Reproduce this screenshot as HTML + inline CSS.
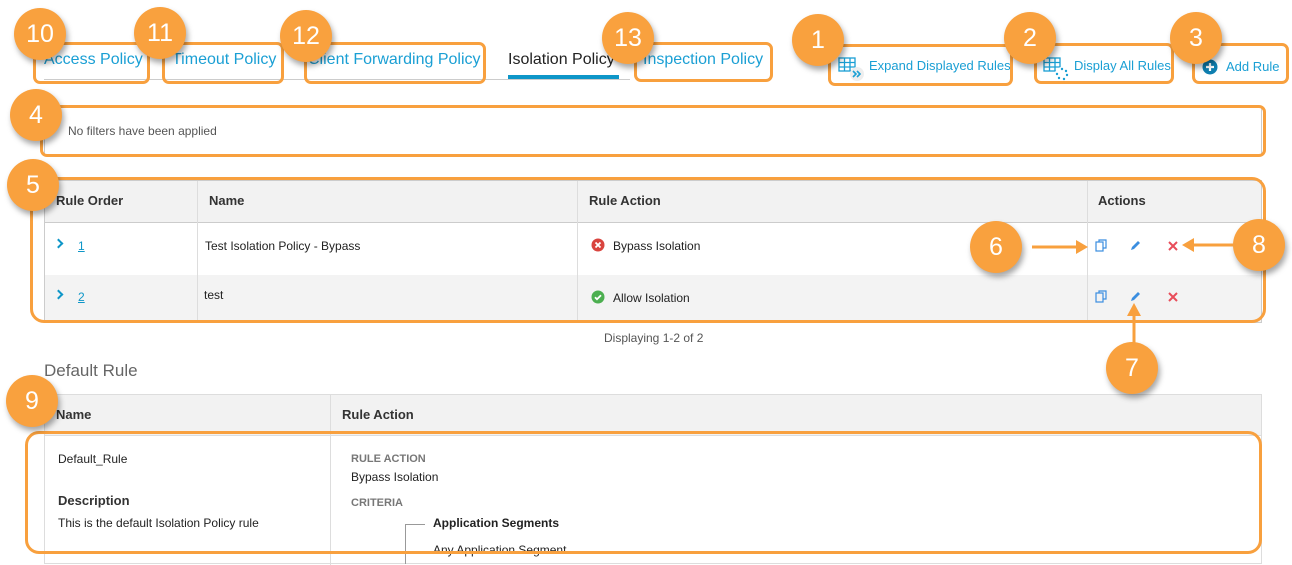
<!DOCTYPE html>
<html><head><meta charset="utf-8"><style>
*{box-sizing:border-box;margin:0;padding:0}
body{width:1292px;height:561px;overflow:hidden;background:#fff;font-family:"Liberation Sans",Arial,sans-serif;color:#222;position:relative}
.a{position:absolute}
.ob{position:absolute;border:3px solid #f8a03e;border-radius:7px}
.c{position:absolute;width:52px;height:52px;border-radius:50%;background:#f9a13e;color:#fff;font-size:25px;text-align:center;line-height:52px;box-shadow:2px 4px 6px rgba(0,0,0,.35);z-index:5}
.tab{position:absolute;top:51px;font-size:16px;color:#1a9fd4;white-space:nowrap}
.btn{position:absolute;font-size:13px;color:#1a9fd4;white-space:nowrap}
.t{position:absolute;font-size:12px;white-space:nowrap}
.h{position:absolute;font-size:13px;font-weight:bold;color:#333;white-space:nowrap}
.chev{position:absolute;width:7px;height:7px;border-top:2.5px solid #0e96c8;border-right:2.5px solid #0e96c8;transform:rotate(45deg)}
</style></head><body>
<!-- tabs -->
<div class="a" style="left:44px;top:79px;width:586px;height:1px;background:#ccc"></div>
<div class="tab" style="left:44px">Access Policy</div>
<div class="tab" style="left:172px">Timeout Policy</div>
<div class="tab" style="left:308px">Client Forwarding Policy</div>
<div class="tab" style="left:508px;color:#222">Isolation Policy</div>
<div class="a" style="left:508px;top:75px;width:111px;height:4px;background:#0e96c8"></div>
<div class="tab" style="left:643px">Inspection Policy</div>
<div class="ob" style="left:33px;top:42px;width:117px;height:42px"></div>
<div class="ob" style="left:162px;top:42px;width:122px;height:42px"></div>
<div class="ob" style="left:304px;top:42px;width:182px;height:42px"></div>
<div class="ob" style="left:634px;top:42px;width:139px;height:40px"></div>
<!-- buttons -->
<svg class="a" style="left:838px;top:57px" width="28" height="26"><g fill="none" stroke="#1a9fd4" stroke-width="1.3"><rect x="1" y="1" width="16" height="13"/><path d="M1 5.5h16M1 10h16M6.5 1v13M12 1v13"/></g><circle cx="19" cy="17" r="7" fill="#eee"/><path d="M15 14l3 3-3 3M19 14l3 3-3 3" stroke="#1a9fd4" stroke-width="1.6" fill="none"/></svg>
<div class="btn" style="left:869px;top:58px">Expand Displayed Rules</div>
<svg class="a" style="left:1043px;top:57px" width="28" height="26"><g fill="none" stroke="#1a9fd4" stroke-width="1.3"><rect x="1" y="1" width="16" height="13"/><path d="M1 5.5h16M1 10h16M6.5 1v13M12 1v13"/></g><circle cx="19" cy="17" r="7" fill="#fff"/><g fill="#1a9fd4"><circle cx="19" cy="12" r="1.2"/><circle cx="23" cy="14" r="1.2"/><circle cx="24" cy="18" r="1.2"/><circle cx="21" cy="22" r="1.2"/><circle cx="16" cy="21" r="1.2"/><circle cx="14" cy="17" r="1.2"/></g></svg>
<div class="btn" style="left:1074px;top:58px">Display All Rules</div>
<svg class="a" style="left:1202px;top:59px" width="16" height="16"><circle cx="8" cy="8" r="7.5" fill="#0e7fb0"/><path d="M8 4v8M4 8h8" stroke="#fff" stroke-width="2.2"/></svg>
<div class="btn" style="left:1226px;top:59px">Add Rule</div>
<div class="ob" style="left:828px;top:44px;width:185px;height:42px"></div>
<div class="ob" style="left:1034px;top:43px;width:140px;height:41px"></div>
<div class="ob" style="left:1192px;top:43px;width:97px;height:41px"></div>
<!-- filter -->
<div class="a" style="left:44px;top:107px;width:1218px;height:49px;border:1px solid #ccc"></div>
<div class="chev" style="left:49px;top:127px;width:6px;height:6px;border-color:#0e7fb0"></div>
<div class="t" style="left:68px;top:124px;color:#555;font-size:12px">No filters have been applied</div>
<div class="ob" style="left:40px;top:105px;width:1226px;height:52px"></div>
<!-- table -->
<div class="a" style="left:44px;top:180px;width:1218px;height:143px;border:1px solid #ccc;background:#fff"></div>
<div class="a" style="left:45px;top:181px;width:1216px;height:42px;background:#f2f2f2;border-bottom:1px solid #ccc"></div>
<div class="a" style="left:45px;top:275px;width:1216px;height:47px;background:#f3f3f3"></div>
<div class="a" style="left:197px;top:181px;width:1px;height:141px;background:#ddd"></div>
<div class="a" style="left:577px;top:181px;width:1px;height:141px;background:#ddd"></div>
<div class="a" style="left:1087px;top:181px;width:1px;height:141px;background:#ddd"></div>
<div class="h" style="left:56px;top:193px">Rule Order</div>
<div class="h" style="left:209px;top:193px">Name</div>
<div class="h" style="left:589px;top:193px">Rule Action</div>
<div class="h" style="left:1098px;top:193px">Actions</div>
<div class="chev" style="left:55px;top:240px"></div>
<div class="t" style="left:78px;top:239px;color:#0e96c8;text-decoration:underline">1</div>
<div class="t" style="left:205px;top:239px">Test Isolation Policy - Bypass</div>
<svg class="a" style="left:591px;top:238px" width="14" height="14"><circle cx="7" cy="7" r="6.5" fill="#d9443e"/><path d="M4.5 4.5l5 5M9.5 4.5l-5 5" stroke="#fff" stroke-width="1.8"/></svg>
<div class="t" style="left:613px;top:239px">Bypass Isolation</div>
<div class="chev" style="left:55px;top:291px"></div>
<div class="t" style="left:78px;top:290px;color:#0e96c8;text-decoration:underline">2</div>
<div class="t" style="left:204px;top:288px">test</div>
<svg class="a" style="left:591px;top:290px" width="14" height="14"><circle cx="7" cy="7" r="6.5" fill="#4caf50"/><path d="M4 7.2l2 2 4-4" stroke="#fff" stroke-width="1.8" fill="none"/></svg>
<div class="t" style="left:613px;top:291px">Allow Isolation</div>
<!-- action icons -->
<svg class="a" style="left:1095px;top:239px" width="12" height="13"><g fill="none" stroke="#3b8ee0" stroke-width="1.2"><rect x="1" y="3" width="7" height="9"/><path d="M4 3V1h7v8H8"/></g></svg>
<svg class="a" style="left:1129px;top:239px" width="13" height="13"><path d="M2 11l1-3 6-6 2 2-6 6z" fill="#3b8ee0"/></svg>
<svg class="a" style="left:1168px;top:241px" width="10" height="10"><path d="M1 1l8 8M9 1l-8 8" stroke="#e84d5a" stroke-width="2"/></svg>
<svg class="a" style="left:1095px;top:290px" width="12" height="13"><g fill="none" stroke="#3b8ee0" stroke-width="1.2"><rect x="1" y="3" width="7" height="9"/><path d="M4 3V1h7v8H8"/></g></svg>
<svg class="a" style="left:1129px;top:290px" width="13" height="13"><path d="M2 11l1-3 6-6 2 2-6 6z" fill="#3b8ee0"/></svg>
<svg class="a" style="left:1168px;top:292px" width="10" height="10"><path d="M1 1l8 8M9 1l-8 8" stroke="#e84d5a" stroke-width="2"/></svg>
<div class="ob" style="left:30px;top:177px;width:1236px;height:146px;border-radius:14px"></div>
<!-- arrows -->
<svg class="a" style="left:1020px;top:235px;z-index:6" width="70" height="20"><path d="M12 12h50" stroke="#f8a03e" stroke-width="3"/><path d="M56 5l12 7-12 7z" fill="#f8a03e"/></svg>
<svg class="a" style="left:1178px;top:235px;z-index:6" width="60" height="20"><path d="M10 10h48" stroke="#f8a03e" stroke-width="3"/><path d="M16 3L4 10l12 7z" fill="#f8a03e"/></svg>
<svg class="a" style="left:1124px;top:300px;z-index:6" width="20" height="46"><path d="M10 10v36" stroke="#f8a03e" stroke-width="3"/><path d="M3 16l7-13 7 13z" fill="#f8a03e"/></svg>
<div class="t" style="left:604px;top:331px;color:#555;font-size:12px">Displaying 1-2 of 2</div>
<!-- default rule -->
<div class="a" style="left:44px;top:361px;font-size:17px;color:#666">Default Rule</div>
<div class="a" style="left:44px;top:394px;width:1218px;height:170px;border:1px solid #ddd"></div>
<div class="a" style="left:45px;top:395px;width:1216px;height:41px;background:#f2f2f2;border-bottom:1px solid #ddd"></div>
<div class="a" style="left:330px;top:395px;width:1px;height:170px;background:#ddd"></div>
<div class="h" style="left:56px;top:407px">Name</div>
<div class="h" style="left:342px;top:407px">Rule Action</div>
<div class="t" style="left:58px;top:452px">Default_Rule</div>
<div class="h" style="left:58px;top:493px">Description</div>
<div class="t" style="left:58px;top:516px;font-size:12px">This is the default Isolation Policy rule</div>
<div class="t" style="left:351px;top:453px;font-size:11px;font-weight:bold;color:#777">RULE ACTION</div>
<div class="t" style="left:351px;top:470px">Bypass Isolation</div>
<div class="t" style="left:351px;top:497px;font-size:11px;font-weight:bold;color:#777">CRITERIA</div>
<div class="a" style="left:405px;top:524px;width:20px;height:1px;background:#999"></div>
<div class="a" style="left:405px;top:524px;width:1px;height:40px;background:#999"></div>
<div class="t" style="left:433px;top:516px;font-weight:bold">Application Segments</div>
<div class="t" style="left:433px;top:543px">Any Application Segment</div>
<div class="ob" style="left:25px;top:431px;width:1237px;height:123px;border-radius:14px"></div>
<!-- circles -->
<div class="c" style="left:14px;top:8px">10</div>
<div class="c" style="left:134px;top:7px">11</div>
<div class="c" style="left:280px;top:10px">12</div>
<div class="c" style="left:602px;top:12px">13</div>
<div class="c" style="left:792px;top:14px">1</div>
<div class="c" style="left:1004px;top:12px">2</div>
<div class="c" style="left:1170px;top:12px">3</div>
<div class="c" style="left:10px;top:89px">4</div>
<div class="c" style="left:7px;top:159px">5</div>
<div class="c" style="left:970px;top:221px">6</div>
<div class="c" style="left:1233px;top:219px">8</div>
<div class="c" style="left:1106px;top:342px">7</div>
<div class="c" style="left:6px;top:375px">9</div>
</body></html>
